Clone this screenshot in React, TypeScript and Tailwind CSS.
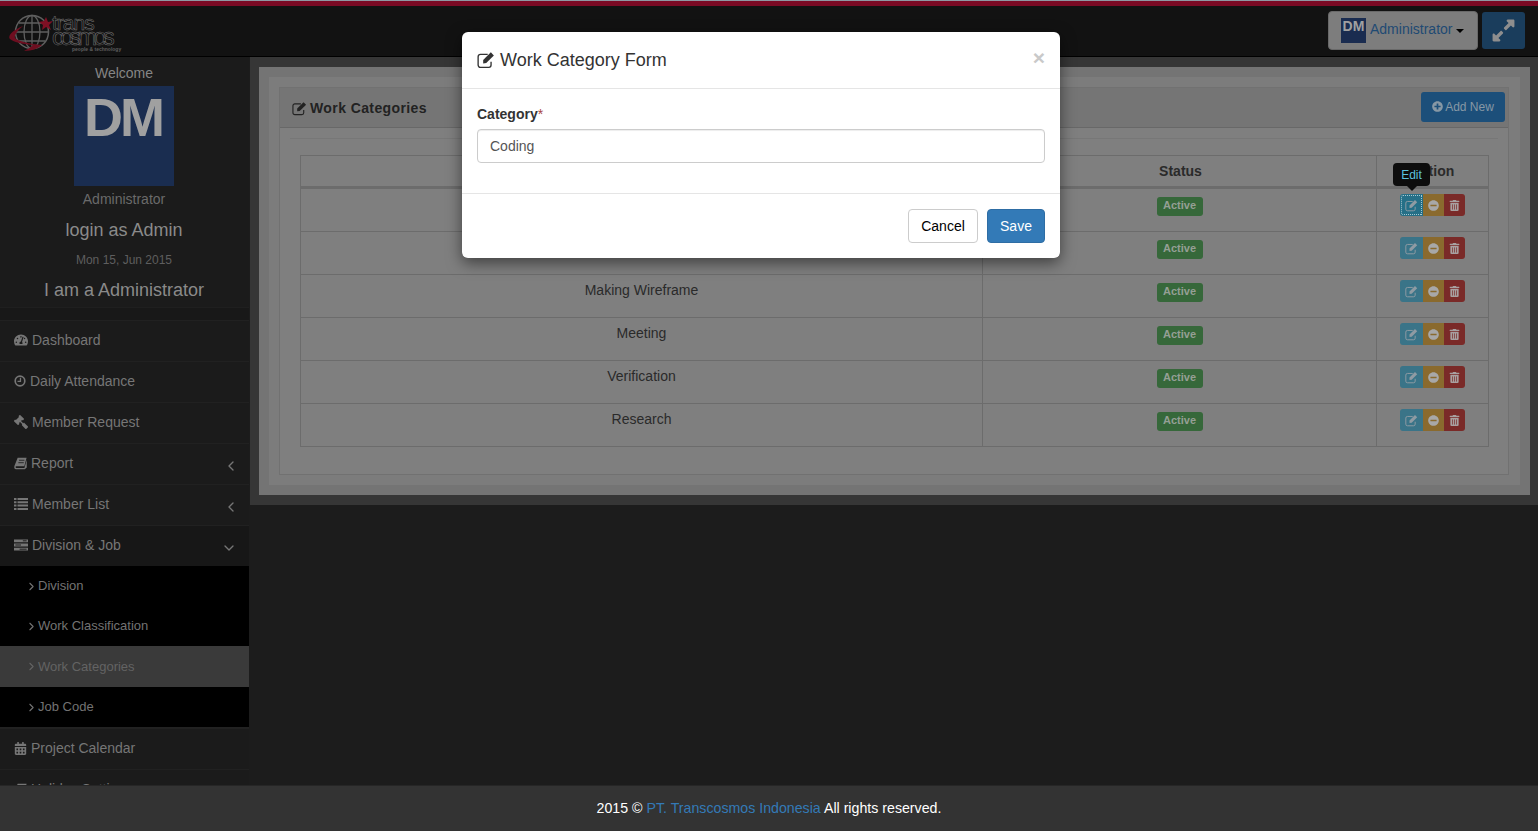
import { FaTachometerAlt, FaGavel, FaCalendarAlt, FaExpandAlt, FaPlusCircle, FaMinusCircle, FaTrashAlt } from 'react-icons/fa';
import { ChevronLeft, ChevronDown, ChevronRight } from 'lucide-react';
import type { ReactNode } from 'react';

const rows = ['Coding', 'Design', 'Making Wireframe', 'Meeting', 'Verification', 'Research'];

function EditIcon({ size = 16 }: { size?: number }) {
  return (
    <svg width={size} height={size} viewBox="0 0 16 16" fill="none">
      <path d="M12.5 9.5v3a2 2 0 0 1-2 2H3a2 2 0 0 1-2-2V5a2 2 0 0 1 2-2h6.5" stroke="currentColor" strokeWidth="1.2" />
      <path d="M5.5 8 12.3 1.2 15 3.9 8.2 10.7 5.5 11z" fill="currentColor" />
    </svg>
  );
}

function ClockIcon() {
  return (
    <svg width="12" height="12" viewBox="0 0 13 13" fill="none" stroke="currentColor">
      <circle cx="6.5" cy="6.5" r="5.2" strokeWidth="1.8" />
      <path d="M7 3v4H3.8" strokeWidth="1.4" />
    </svg>
  );
}

function BookIcon() {
  return (
    <svg width="13" height="13" viewBox="0 0 16 16">
      <path d="M4.5 1H15.5l-2.8 10.5H2.8c-1.2 0-1.2 1.8 0 2h10L15.7 3.5v9.5l-2.4 2H2.5C.5 15 0 13 .5 11z" fill="currentColor" />
      <path d="M6.2 4h6.6M5.4 7h6.6" stroke="#1b1b1b" strokeWidth="1" />
    </svg>
  );
}

function TasksIcon() {
  return (
    <svg width="14" height="12" viewBox="0 0 15 12">
      <path d="M0 0h15v3H0zM0 4.5h15v3H0zM0 9h15v3H0z" fill="currentColor" />
      <path d="M9.5 1.5h4M1.5 6h6M6 10.5h7.5" stroke="#1b1b1b" strokeWidth="1" />
    </svg>
  );
}

function ListIcon() {
  return (
    <svg width="14" height="12" viewBox="0 0 14 12" fill="currentColor">
      <path d="M0 0h2.5v2H0zM3.5 0H14v2H3.5zM0 3.3h2.5v2H0zM3.5 3.3H14v2H3.5zM0 6.6h2.5v2H0zM3.5 6.6H14v2H3.5zM0 10h2.5v2H0zM3.5 10H14v2H3.5z" />
    </svg>
  );
}

function Logo() {
  return (
    <div className="relative w-[110px] h-[40px] mt-[5px]">
      <svg width="56" height="40" viewBox="0 0 56 40" fill="none" className="absolute left-0 top-0">
        <circle cx="24" cy="19" r="16.5" stroke="#5f5f5f" strokeWidth="1.5" />
        <ellipse cx="24" cy="19" rx="8" ry="16.5" stroke="#5f5f5f" strokeWidth="1.3" />
        <path d="M24 2.5v33M8 19h32M11 10h26M11 28h26" stroke="#5f5f5f" strokeWidth="1.3" />
        <path d="M15 13C5 17 -1 23 2 26c3 3 12 5 23 6-3 3-6 4-9 6 8 0 15-3 18-6C22 31 9 28 7 25c-1-3 3-8 8-12z" fill="#6e0e20" />
        <path d="M38 4l2 5 5-1-4 4 2 5-5-3-4 3 1-5-4-3 5-1z" fill="#7e1024" />
      </svg>
      <span className="absolute left-[44px] top-[3px] text-[21px] leading-[14px] tracking-[-1px] text-transparent [-webkit-text-stroke:0.5px_#777]">trans</span>
      <span className="absolute left-[44px] top-[17px] text-[24px] leading-[14px] tracking-[-4px] text-transparent [-webkit-text-stroke:0.5px_#777]">cosmos</span>
      <span className="absolute left-[64px] top-[33px] text-[5px] leading-[6px] font-bold text-[#5e5e5e] whitespace-nowrap">people &amp; technology</span>
    </div>
  );
}

function MenuItem({ icon, label, arrow, open }: { icon: ReactNode; label: string; arrow?: 'left' | 'down'; open?: boolean }) {
  return (
    <div className={`h-[41px] shrink-0 flex items-center gap-[4px] px-[14px] pb-[2px] text-[14px] text-[#767676] border-t border-[#212121] ${open ? 'bg-[#171717]' : ''}`}>
      <span className="flex">{icon}</span>
      <span className="flex-1">{label}</span>
      {arrow === 'left' && <ChevronLeft size={16} strokeWidth={2} className="mt-[6px] -mr-[4px]" />}
      {arrow === 'down' && <ChevronDown size={16} strokeWidth={2} className="mt-[6px] -mr-[2px]" />}
    </div>
  );
}

function SubItem({ label, active, h = 'h-[40px]' }: { label: string; active?: boolean; h?: string }) {
  return (
    <div className={`${h} shrink-0 flex items-center pl-[25px] text-[13px] ${active ? 'bg-[#3a3a3a] text-[#636363]' : 'bg-black text-[#737373]'}`}>
      <ChevronRight size={13} strokeWidth={2} />
      <span>{label}</span>
    </div>
  );
}

function Sidebar() {
  return (
    <aside className="w-[249px] shrink-0 bg-[#1b1b1b] overflow-hidden flex flex-col">
      <div className="h-[251px] shrink-0 flex flex-col items-center text-center pt-[6px] pr-[1px] border-b border-[#1f1f1f]">
        <div className="h-[20px] text-[14px] leading-[20px] text-[#858585]">Welcome</div>
        <div className="mt-[3px] w-[100px] h-[100px] pr-[2px] bg-[#1a2d50] text-[#a0a0a0] text-[54px] font-bold leading-[63px] tracking-[-3px]">DM</div>
        <div className="mt-[3px] h-[20px] text-[14px] leading-[20px] text-[#6a6a6a]">Administrator</div>
        <div className="mt-[9px] h-[24px] text-[18px] leading-[24px] text-[#8a8a8a]">login as Admin</div>
        <div className="mt-[10px] h-[17px] text-[12px] leading-[17px] text-[#5e5e5e]">Mon 15, Jun 2015</div>
        <div className="mt-[9px] h-[24px] text-[18px] leading-[24px] text-[#8a8a8a]">I am a Administrator</div>
      </div>
      <div className="h-[12px] shrink-0 bg-[#181818]" />
      <MenuItem icon={<FaTachometerAlt />} label="Dashboard" />
      <MenuItem icon={<ClockIcon />} label="Daily Attendance" />
      <MenuItem icon={<FaGavel className="-scale-x-100" />} label="Member Request" />
      <MenuItem icon={<BookIcon />} label="Report" arrow="left" />
      <MenuItem icon={<ListIcon />} label="Member List" arrow="left" />
      <MenuItem icon={<TasksIcon />} label="Division & Job" arrow="down" open />
      <SubItem label="Division" />
      <SubItem label="Work Classification" />
      <SubItem label="Work Categories" active h="h-[41px]" />
      <SubItem label="Job Code" />
      <div className="h-[1px] shrink-0 bg-[#222]" />
      <MenuItem icon={<FaCalendarAlt className="text-[13px]" />} label="Project Calendar" />
      <MenuItem icon={<BookIcon />} label="Holiday Setting" />
    </aside>
  );
}

function ActionButtons({ focused }: { focused?: boolean }) {
  return (
    <div className="relative inline-flex h-[22px] text-[11px] text-[#8f9ba3]">
      {focused && (
        <div className="absolute left-[-7px] top-[-31px] w-[37px] h-[23px] rounded-[4px] bg-[#0d0d0d] text-[#5cc0de] text-[12px] leading-[24px] text-center">
          Edit
          <div className="absolute left-[14px] top-[23px] w-0 h-0 border-x-[5px] border-t-[5px] border-x-transparent border-t-[#0d0d0d]" />
        </div>
      )}
      <div className={`w-[23px] flex items-center justify-center rounded-l-[3px] ${focused ? 'bg-[#256f87] outline-1 outline-dotted outline-offset-[-2px] outline-[#a8c8d0]' : 'bg-[#3a7488]'}`}>
        <EditIcon size={13} />
      </div>
      <div className="w-[21px] flex items-center justify-center bg-[#8a6a2e] text-[#a8a8a8]"><FaMinusCircle /></div>
      <div className="w-[21px] flex items-center justify-center rounded-r-[3px] bg-[#7a2a28] text-[#a8a0a0]"><FaTrashAlt /></div>
    </div>
  );
}

function WorkTable() {
  return (
    <table className="w-[1188px] table-fixed border-collapse text-[14px] text-[#2a2a2a]">
      <colgroup>
        <col className="w-[682px]" />
        <col className="w-[394px]" />
        <col className="w-[112px]" />
      </colgroup>
      <thead>
        <tr className="h-[32px]">
          <th className="border border-[#6c6c6c] border-b-[3px] font-bold">Category</th>
          <th className="border border-[#6c6c6c] border-b-[3px] font-bold pl-[2px]">Status</th>
          <th className="border border-[#6c6c6c] border-b-[3px] font-bold">Action</th>
        </tr>
      </thead>
      <tbody>
        {rows.map((name, i) => (
          <tr key={name} className={i === 0 ? 'h-[44px]' : 'h-[43px]'}>
            <td className="border border-[#6c6c6c] align-top text-center pt-[5px] leading-[20px]">{name}</td>
            <td className="border border-[#6c6c6c] align-top text-center pt-[8px] leading-none">
              <span className="inline-block h-[19px] w-[46px] rounded-[3px] bg-[#36683a] text-[#959f95] text-[11px] font-bold leading-[17px]">Active</span>
            </td>
            <td className="border border-[#6c6c6c] align-top text-center pt-[5px] leading-none">
              <ActionButtons focused={i === 0} />
            </td>
          </tr>
        ))}
      </tbody>
    </table>
  );
}

function Modal() {
  return (
    <div className="absolute left-[462px] top-[32px] w-[598px] h-[226px] bg-white rounded-[6px] shadow-[0_5px_15px_rgba(0,0,0,0.5)] flex flex-col text-[#333]">
      <div className="h-[57px] shrink-0 border-b border-[#e5e5e5] flex items-center px-[15px]">
        <span className="mr-[5px] flex"><EditIcon size={18} /></span>
        <span className="text-[18px] flex-1">Work Category Form</span>
        <span className="text-[21px] font-bold text-[#c9c9c9] leading-none mb-[5px]">×</span>
      </div>
      <div className="h-[105px] shrink-0 border-b border-[#e5e5e5] px-[15px] pt-[15px]">
        <div className="text-[14px] font-bold leading-[20px]">Category<span className="font-normal text-[#a94442]">*</span></div>
        <input
          readOnly
          value="Coding"
          className="mt-[5px] block w-full h-[34px] px-[12px] text-[14px] text-[#555] border border-[#ccc] rounded-[4px] shadow-[inset_0_1px_1px_rgba(0,0,0,0.075)] outline-none"
        />
      </div>
      <div className="flex-1 flex justify-end items-start gap-[9px] pt-[15px] pr-[15px]">
        <button className="w-[70px] h-[34px] border border-[#ccc] rounded-[4px] text-[14px] text-black bg-white">Cancel</button>
        <button className="w-[58px] h-[34px] border border-[#2e6da4] rounded-[4px] text-[14px] text-white bg-[#337ab7]">Save</button>
      </div>
    </div>
  );
}

export default function App() {
  return (
    <div className="h-screen overflow-hidden flex flex-col bg-[#1c1c1c] font-['Liberation_Sans',Arial,sans-serif]">
      <div className="relative flex-1 min-h-0 flex flex-col">
        <div className="h-[6px] shrink-0 bg-[#7a0a24] border-t border-[#8f98a3]" />
        <header className="h-[51px] shrink-0 bg-[#121212] border-b border-black flex items-center justify-between pl-[8px] pr-[13px] pb-[1px]">
          <Logo />
          <div className="flex items-center gap-[4px]">
            <div className="w-[150px] h-[39px] rounded-[4px] bg-[#7d7d7d] border border-[#696969] flex items-center pl-[12px] text-[14px] text-[#1f4a73]">
              <div className="w-[25px] h-[25px] bg-[#1a2c50] text-[#a0a0a0] text-[14px] font-bold leading-[16px] text-center mr-[4px]">DM</div>
              <span className="-mt-[3px]">Administrator</span>
              <span className="ml-[4px] w-0 h-0 border-x-[4px] border-t-[4px] border-x-transparent border-t-black" />
            </div>
            <div className="w-[43px] h-[37px] rounded-[3px] bg-[#1a3d5c] text-[#8e8e8e] flex items-center justify-center text-[25px]">
              <FaExpandAlt />
            </div>
          </div>
        </header>
        <div className="flex-1 min-h-0 flex">
          <Sidebar />
          <main className="flex-1 min-w-0 bg-[#1c1c1c] pl-[1px]">
            <div className="h-[448px] bg-[#363636] pt-[10px] pl-[9px] pr-[8px] pb-[10px]">
              <div className="h-full bg-[#747474] p-[10px]">
                <div className="h-full bg-[#7c7c7c] p-[10px] pr-[11px]">
                  <div className="h-full bg-[#7f7f7f] border border-[#717171] flex flex-col">
                    <div className="h-[40px] shrink-0 bg-[#757575] border-b border-[#686868] flex items-center justify-between pl-[12px] pr-[3px] text-[#222]">
                      <div className="flex items-center gap-[3px] text-[14px] font-bold pt-[1px]">
                        <EditIcon size={15} />
                        <span className="tracking-[0.4px]">Work Categories</span>
                      </div>
                      <div className="w-[84px] h-[30px] -mt-[2px] rounded-[3px] bg-[#1c4f7a] text-[#8798a5] text-[12px] flex items-center justify-center gap-[2px]">
                        <FaPlusCircle className="text-[11px]" />
                        Add New
                      </div>
                    </div>
                    <div className="mx-[10px] mt-[10px] border-t border-[#777] pt-[16px] px-[10px]">
                      <WorkTable />
                    </div>
                  </div>
                </div>
              </div>
            </div>
          </main>
        </div>
        <Modal />
      </div>
      <footer className="h-[46px] shrink-0 bg-[#333] border-t border-[#262626] flex items-center justify-center text-[14.2px] text-white">
        <span>2015 © <span className="text-[#337ab7]">PT. Transcosmos Indonesia</span> All rights reserved.</span>
      </footer>
    </div>
  );
}
